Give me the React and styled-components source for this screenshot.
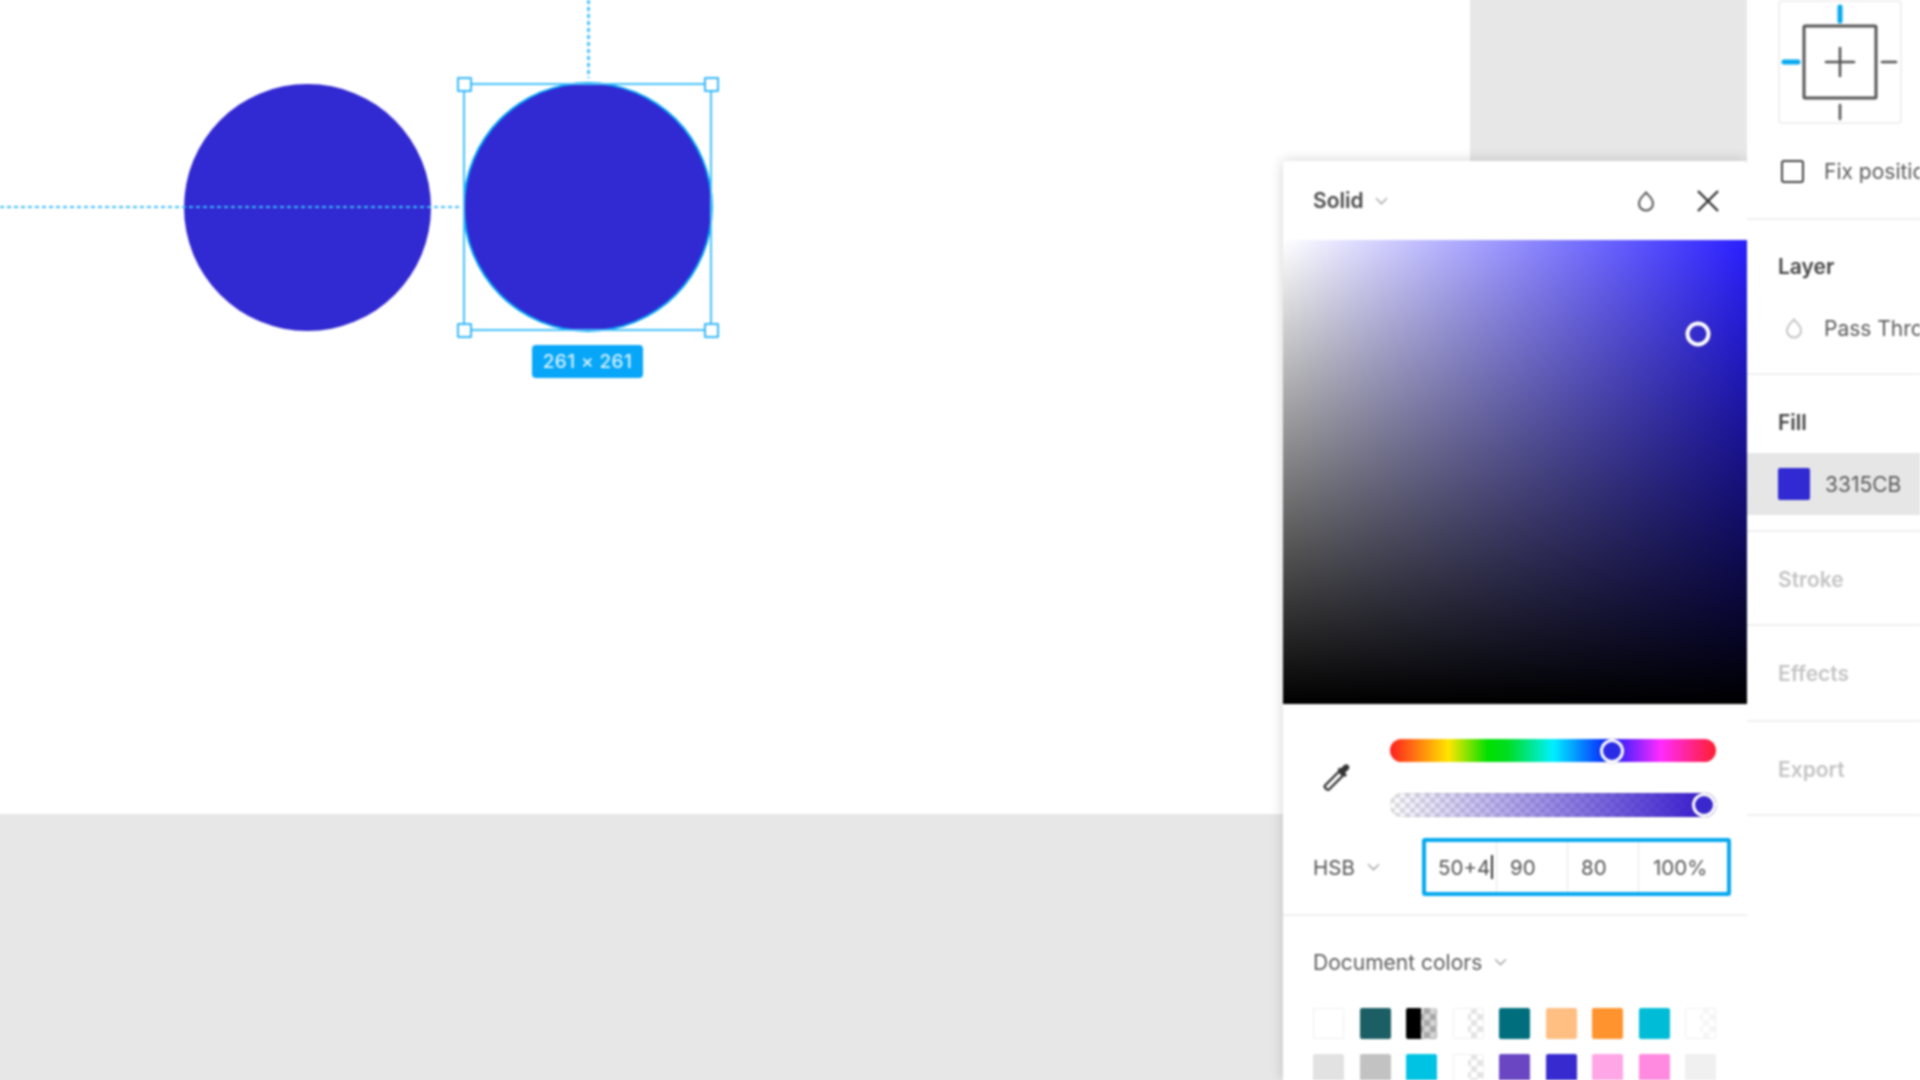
import React from "react";
import styled, { createGlobalStyle } from "styled-components";

const Global = createGlobalStyle`
  html, body { margin: 0; padding: 0; background: #fff; }
  body { font-family: Inter, "Noto Sans", "Liberation Sans", sans-serif; }
  * { box-sizing: border-box; }
`;

const Viewport = styled.div`
  width: 1920px; height: 1080px; overflow: hidden;
  background:
    linear-gradient(#fff, #fff) 1283px 161px / 637px 919px no-repeat,
    linear-gradient(#fff, #fff) 1747px 0 / 173px 161px no-repeat,
    linear-gradient(#fff, #fff) 0 0 / 1470px 814px no-repeat,
    #e7e7e7;
`;
const Page = styled.div`
  width: 1920px; height: 1080px; display: flex; overflow: hidden; filter: blur(0.8px);
`;
const Canvas = styled.main`
  flex: 1; position: relative; background: #e7e7e7;
`;
const Artboard = styled.div`
  width: 1470px; height: 814px; background: #fff; position: relative;
`;
const Circle = styled.div`
  position: absolute; left: ${p => p.$x}px; top: ${p => p.$y}px;
  width: ${p => p.$d}px; height: ${p => p.$d}px; border-radius: 50%; background: #3129d2;
  ${p => p.$outlined && "box-shadow: 0 0 0 2px #00a4f5;"}
`;
const GuideH = styled.div`
  position: absolute; left: 0; top: 206px; width: 461px; height: 2px;
  background: repeating-linear-gradient(90deg, #3ebcf8 0 4px, transparent 4px 7px);
`;
const GuideV = styled.div`
  position: absolute; left: 587px; top: 0; width: 3px; height: 78px;
  background: repeating-linear-gradient(180deg, #4ec4fa 0 4px, transparent 4px 7px);
`;
const Selection = styled.div`
  position: absolute; left: 463px; top: 83px; width: 249px; height: 248px; border: 2.5px solid #45bffa;
`;
const Handle = styled.span`
  position: absolute; width: 15px; height: 15px; background: #fff; border: 2.5px solid #37b8f8; border-radius: 1px;
  ${p => (p.$v === "t" ? "top: -8.5px;" : "bottom: -8.5px;")}
  ${p => (p.$h === "l" ? "left: -8.5px;" : "right: -8.5px;")}
`;
const SizeLabel = styled.div`
  position: absolute; left: 532px; top: 345px; width: 111px; height: 33px; border-radius: 4px;
  background: #07a6f8; color: #d9f3ff; font-size: 19px; font-weight: 500; letter-spacing: 0.4px;
  display: flex; align-items: center; justify-content: center;
`;

const Popup = styled.div`
  position: absolute; left: 1283px; top: 161px; width: 464px; height: 919px;
  background: #fff; border-radius: 3px 3px 0 0; overflow: hidden;
  box-shadow: 0 0 14px rgba(0,0,0,.18);
  color: #444;
`;
const PopupHeader = styled.header`
  height: 79px; display: flex; align-items: center; padding: 0 27px 0 30px;
`;
const PopupTitle = styled.span`
  font-size: 21px; font-weight: 600; color: #4a4a4a;
`;
const ChevronSvg = styled.svg`
  width: 13px; height: 8px; margin-left: ${p => p.$ml || 11}px; flex: none;
  fill: none; stroke: #aaa; stroke-width: 1.5;
`;
const Chevron = ({ ml }) => (
  <ChevronSvg $ml={ml} viewBox="0 0 13 8"><path d="M1 1.2 6.5 6.6 12 1.2" /></ChevronSvg>
);
const HeaderSpacer = styled.div` flex: 1; `;
const DropIcon = styled.svg`
  width: 18px; height: 22px; flex: none; fill: none; stroke: ${p => p.$c || "#555"}; stroke-width: 2;
`;
const CloseIcon = styled.svg`
  width: 24px; height: 24px; margin-left: 41px; flex: none; fill: none; stroke: #333; stroke-width: 2.4;
`;
const SatVal = styled.div`
  position: relative; height: 464px;
  background:
    linear-gradient(180deg, rgba(0,0,0,0), #000),
    linear-gradient(90deg, #fff, #2a1fff);
`;
const Thumb = styled.span`
  position: absolute; border-radius: 50%;
  left: ${p => p.$x}px; top: ${p => p.$y}px; width: ${p => p.$s}px; height: ${p => p.$s}px;
  transform: translate(-50%, -50%);
  background: ${p => p.$bg}; border: ${p => p.$b}px solid #fff;
  box-shadow: 0 0 2px rgba(0,0,0,.35);
`;
const SliderArea = styled.div`
  display: flex; align-items: center; padding: 35px 31px 0 38px;
`;
const Pipette = styled.svg`
  width: 32px; height: 32px; flex: none; margin-bottom: 2px;
`;
const SliderColumn = styled.div`
  margin-left: auto; width: 326px; display: flex; flex-direction: column; gap: 31px;
`;
const HueTrack = styled.div`
  position: relative; height: 23px; border-radius: 12px;
  background: linear-gradient(90deg, #ff1f1f, #ffe600 18%, #00e000 30%, #00dd20 36%, #00f0ff 50%, #0a1cff 67%, #ff2bff 83%, #ff1f2f);
`;
const AlphaTrack = styled.div`
  position: relative; height: 24px; border-radius: 12px;
  background:
    linear-gradient(90deg, rgba(51,21,203,0), #3315cb),
    repeating-conic-gradient(#dedede 0 25%, #fff 0 50%) 0 0 / 10px 10px;
  box-shadow: inset 0 0 0 1px rgba(0,0,0,.08);
`;
const ColorRow = styled.div`
  display: flex; align-items: center; padding: 21px 16px 18px 30px;
  border-bottom: 2px solid #f0f0f0;
`;
const ColorModel = styled.span`
  font-size: 20.5px; color: #555;
`;
const Fields = styled.div`
  margin-left: auto; width: 309px; height: 58px; border: 4px solid #05a8ee; border-radius: 3px;
  display: grid; grid-template-columns: 70px 71px 71px 1fr;
`;
const Field = styled.div`
  display: flex; align-items: center; padding-left: ${p => p.$pl || 12}px; font-size: 20.5px; color: #555;
  & + & { border-left: 1.5px solid #e6e6e6; }
`;
const Caret = styled.i`
  display: inline-block; width: 1.5px; height: 24px; background: #333; margin-left: 1px;
`;
const DocHeader = styled.div`
  display: flex; align-items: center; height: 24px; margin: 34px 0 0 30px;
  font-size: 21px; color: #5c5c5c;
`;
const SwatchGrid = styled.div`
  display: grid; grid-template-columns: repeat(9, 31px); column-gap: 15.5px; row-gap: 15px;
  margin: 34px 0 0 30px;
`;
const Swatch = styled.span`
  height: 31px; border-radius: 2px; background: ${p => p.$bg};
  ${p => p.$line && "box-shadow: inset 0 0 0 1px #f0f0f0;"}
`;
const CheckSwatch = styled(Swatch)`
  background:
    linear-gradient(90deg, ${p => p.$left} 50%, transparent 50%),
    repeating-conic-gradient(${p => p.$tile} 0 25%, ${p => p.$base} 0 50%) 0 0 / 12px 12px;
`;

const Panel = styled.aside`
  width: 173px; flex: none; background: #fff; overflow: hidden; position: relative; color: #555;
`;
const ConstraintSection = styled.section`
  height: 220px; border-bottom: 2px solid #efefef; padding-left: 31px;
`;
const ConstraintBox = styled.div`
  width: 124px; height: 124px; border: 2px solid #f0f0f0; border-radius: 4px;
  display: flex;
`;
const ConstraintSvg = styled.svg`
  width: 120px; height: 120px; fill: none; stroke-linecap: round;
`;
const CheckRow = styled.div`
  display: flex; align-items: center; height: 28px; margin-top: 33px; white-space: nowrap; padding-left: 3px;
`;
const Checkbox = styled.span`
  width: 23px; height: 23px; border: 2.5px solid #444; border-radius: 3px; flex: none; margin-right: 20px;
`;
const RowText = styled.span`
  font-size: 21px; color: #5a5a5a; white-space: nowrap;
`;
const Section = styled.section`
  height: ${p => p.$h}px; border-bottom: 2px solid #efefef; padding-top: ${p => p.$pt}px;
`;
const SectionTitle = styled.h3`
  margin: 0 0 0 31px; height: 28px; line-height: 28px; font-size: 21px; font-weight: 600;
  color: ${p => (p.$muted ? "#c4c4c4" : "#444")};
`;
const BlendRow = styled.div`
  display: flex; align-items: center; height: 28px; margin-top: 33px; padding-left: 38px; gap: 21px;
`;
const FillRow = styled.div`
  display: flex; align-items: center; height: 62px; margin-top: 16px; padding-left: 31px; gap: 15px;
  background: #e6e6e6;
`;
const FillChip = styled.span`
  width: 32px; height: 32px; border-radius: 2px; background: #3129d2; flex: none;
`;

const Drop = ({ c }) => (
  <DropIcon $c={c} viewBox="0 0 18 22">
    <path d="M9 2.5c2 2.6 7 6 7 11a7 7 0 0 1-14 0c0-5 5-8.4 7-11Z" />
  </DropIcon>
);

const row1 = [
  { bg: "#fff", line: true }, { bg: "#1b5e64" },
  { check: true, left: "#000", tile: "#a8a8a8", base: "#d4d4d4" },
  { check: true, left: "#fff", tile: "#e4e4e4", base: "#fff", line: true },
  { bg: "#006e7c" }, { bg: "#ffbe82" }, { bg: "#ff942e" }, { bg: "#00bcd6" },
  { check: true, left: "#fff", tile: "#f6f6f6", base: "#fff", line: true },
];
const row2 = [
  { bg: "#e2e2e2" }, { bg: "#c2c2c2" }, { bg: "#00c3e3" },
  { check: true, left: "#fff", tile: "#e4e4e4", base: "#fff", line: true },
  { bg: "#6b46c3" }, { bg: "#372bd0" }, { bg: "#ffa6e6" }, { bg: "#ff8adf" }, { bg: "#f0f0f0" },
];

export default function App() {
  return (
    <Viewport>
      <Global />
      <Page>
        <Canvas>
          <Artboard>
            <Circle $x={184} $y={84} $d={247} />
            <GuideH />
            <GuideV />
            <Circle $x={465} $y={84} $d={246} $outlined />
            <Selection>
              <Handle $v="t" $h="l" /><Handle $v="t" $h="r" />
              <Handle $v="b" $h="l" /><Handle $v="b" $h="r" />
            </Selection>
            <SizeLabel>261 × 261</SizeLabel>
          </Artboard>
          <Popup>
            <PopupHeader>
              <PopupTitle>Solid</PopupTitle>
              <Chevron />
              <HeaderSpacer />
              <Drop />
              <CloseIcon viewBox="0 0 24 24"><path d="M2 2 22 22M22 2 2 22" /></CloseIcon>
            </PopupHeader>
            <SatVal><Thumb $x={415} $y={94} $s={25} $b={4} $bg="transparent" /></SatVal>
            <SliderArea>
              <Pipette viewBox="0 0 32 32">
                <path d="M4 24.5 18 10.5l4 4L8 28.5c-1.4 1.4-5.4-2.6-4-4Z" fill="#fff" stroke="#333" strokeWidth="2.4" strokeLinejoin="round" />
                <path d="M16.5 8.5l7.5 7.5 2-2-2-2 3.4-3.4c1.6-1.6 1.2-3.2 0-4.4s-2.8-1.6-4.4 0L19.6 7.6l-1.2-1.1Z" fill="#333" />
              </Pipette>
              <SliderColumn>
                <HueTrack><Thumb $x={222} $y={11.5} $s={24} $b={3.5} $bg="#2a2ce6" /></HueTrack>
                <AlphaTrack><Thumb $x={314} $y={12} $s={24} $b={3.5} $bg="#3a28cc" /></AlphaTrack>
              </SliderColumn>
            </SliderArea>
            <ColorRow>
              <ColorModel>HSB</ColorModel>
              <Chevron ml={12} />
              <Fields>
                <Field>50+4<Caret /></Field>
                <Field $pl={13}>90</Field>
                <Field $pl={13}>80</Field>
                <Field $pl={14}>100%</Field>
              </Fields>
            </ColorRow>
            <DocHeader>Document colors<Chevron ml={12} /></DocHeader>
            <SwatchGrid>
              {[...row1, ...row2].map((s, i) =>
                s.check
                  ? <CheckSwatch key={i} $left={s.left} $tile={s.tile} $base={s.base} $line={s.line} />
                  : <Swatch key={i} $bg={s.bg} $line={s.line} />
              )}
            </SwatchGrid>
          </Popup>
        </Canvas>
        <Panel>
          <ConstraintSection>
            <ConstraintBox>
              <ConstraintSvg viewBox="0 0 120 120">
                <rect x="24" y="24" width="72" height="72" rx="1" stroke="#555" strokeWidth="3" />
                <path d="M60 46V74M46 60H74" stroke="#555" strokeWidth="2.6" />
                <path d="M60 5V19M4 60H18" stroke="#05a8ee" strokeWidth="5" />
                <path d="M60 103V117M102 60H116" stroke="#555" strokeWidth="2.6" />
              </ConstraintSvg>
            </ConstraintBox>
            <CheckRow><Checkbox /><RowText>Fix position when scrolling</RowText></CheckRow>
          </ConstraintSection>
          <Section $h={155} $pt={33}>
            <SectionTitle>Layer</SectionTitle>
            <BlendRow><Drop c="#c4c4c4" /><RowText>Pass Through</RowText></BlendRow>
          </Section>
          <Section $h={157} $pt={34}>
            <SectionTitle>Fill</SectionTitle>
            <FillRow><FillChip /><RowText>3315CB</RowText></FillRow>
          </Section>
          <Section $h={94} $pt={34}><SectionTitle $muted>Stroke</SectionTitle></Section>
          <Section $h={96} $pt={34}><SectionTitle $muted>Effects</SectionTitle></Section>
          <Section $h={94} $pt={34}><SectionTitle $muted>Export</SectionTitle></Section>
        </Panel>
      </Page>
    </Viewport>
  );
}
